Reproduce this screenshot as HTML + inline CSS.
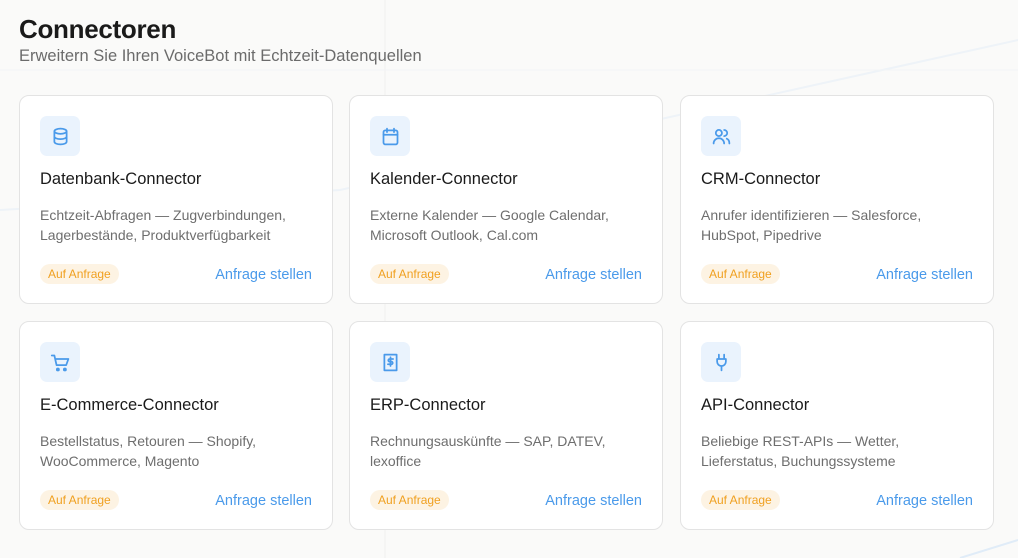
<!DOCTYPE html>
<html><head><meta charset="utf-8"><style>
*{box-sizing:border-box;margin:0;padding:0}
body{width:1018px;height:558px;background:#fafaf9;font-family:"Liberation Sans",sans-serif;position:relative;overflow:hidden}
h1{position:absolute;left:19px;top:14px;font-size:26px;font-weight:700;color:#1a1a1a;letter-spacing:-0.3px}
.sub{position:absolute;left:19px;top:47px;font-size:16.5px;color:#6b6b6b}
.card{position:absolute;width:314px;height:209px;background:#fff;border:1px solid #e3e3e3;border-radius:10px}
.ic{position:absolute;left:20px;top:20px;width:40px;height:40px;border-radius:7px;background:#eaf3fd;display:flex;align-items:center;justify-content:center}
.ic svg{width:21px;height:21px;fill:none;stroke:#4a9aea;stroke-width:2;stroke-linecap:round;stroke-linejoin:round}
.t{position:absolute;left:20px;top:74px;font-size:16.5px;color:#1a1a1a;font-weight:500}
.d{position:absolute;left:20px;top:109px;font-size:14px;line-height:20px;color:#6e6e6e;width:262px}
.b{position:absolute;left:20px;top:168px;height:20px;padding:0 8px;border-radius:10px;background:#fdf3e3;color:#f0a020;font-size:12px;line-height:20px}
.l{position:absolute;right:20px;top:171px;font-size:14.5px;color:#4a9aea}
.bg{position:absolute;left:0;top:0}
</style></head><body>
<svg class="bg" width="1018" height="558"><path d="M0 210 L340 190 L1018 40" stroke="#eef3f8" stroke-width="2" fill="none"/><path d="M385 0 V558" stroke="#f0f0f0" stroke-width="1"/><path d="M0 70 H1018" stroke="#f2f4f6" stroke-width="1"/><path d="M960 558 L1018 540" stroke="#e0ecf8" stroke-width="2"/></svg>
<h1>Connectoren</h1>
<div class="sub">Erweitern Sie Ihren VoiceBot mit Echtzeit-Datenquellen</div>

<div class="card" style="left:19px;top:95px"><div class="ic"><svg viewBox="0 0 24 24"><ellipse cx="12" cy="6" rx="7" ry="3"/><path d="M5 6v12c0 1.7 3.1 3 7 3s7-1.3 7-3V6M5 12c0 1.7 3.1 3 7 3s7-1.3 7-3"/></svg></div><div class="t">Datenbank-Connector</div><div class="d">Echtzeit-Abfragen — Zugverbindungen, Lagerbestände, Produktverfügbarkeit</div><div class="b">Auf Anfrage</div><div class="l">Anfrage stellen</div></div>

<div class="card" style="left:349px;top:95px"><div class="ic"><svg viewBox="0 0 24 24"><rect x="4" y="5" width="16" height="16" rx="2"/><path d="M8 3v4M16 3v4M4 10h16"/></svg></div><div class="t">Kalender-Connector</div><div class="d">Externe Kalender — Google Calendar, Microsoft Outlook, Cal.com</div><div class="b">Auf Anfrage</div><div class="l">Anfrage stellen</div></div>

<div class="card" style="left:680px;top:95px"><div class="ic"><svg viewBox="0 0 24 24"><circle cx="9" cy="8" r="3.5"/><path d="M3 20c0-3.5 2.7-6 6-6s6 2.5 6 6M15 4.5a3.5 3.5 0 0 1 0 7M18 14.5c2 .8 3 2.8 3 5.5"/></svg></div><div class="t">CRM-Connector</div><div class="d">Anrufer identifizieren — Salesforce, HubSpot, Pipedrive</div><div class="b">Auf Anfrage</div><div class="l">Anfrage stellen</div></div>

<div class="card" style="left:19px;top:321px"><div class="ic"><svg viewBox="0 0 24 24"><path d="M2 4h3l2.5 11h11L21 8H6"/><circle cx="9" cy="20" r="1.2" fill="#4a9aea"/><circle cx="17" cy="20" r="1.2" fill="#4a9aea"/></svg></div><div class="t">E-Commerce-Connector</div><div class="d">Bestellstatus, Retouren — Shopify, WooCommerce, Magento</div><div class="b">Auf Anfrage</div><div class="l">Anfrage stellen</div></div>

<div class="card" style="left:349px;top:321px"><div class="ic"><svg viewBox="0 0 24 24"><path d="M5 3h14v18H5z"/><path d="M15 8h-4a1.5 1.5 0 0 0 0 3h2a1.5 1.5 0 0 1 0 3H9M12 6v10"/></svg></div><div class="t">ERP-Connector</div><div class="d">Rechnungsauskünfte — SAP, DATEV, lexoffice</div><div class="b">Auf Anfrage</div><div class="l">Anfrage stellen</div></div>

<div class="card" style="left:680px;top:321px"><div class="ic"><svg viewBox="0 0 24 24"><path d="M9 3v5M15 3v5M7 8h10v3a5 5 0 0 1-10 0zM12 16v5"/></svg></div><div class="t">API-Connector</div><div class="d">Beliebige REST-APIs — Wetter, Lieferstatus, Buchungssysteme</div><div class="b">Auf Anfrage</div><div class="l">Anfrage stellen</div></div>
</body></html>
